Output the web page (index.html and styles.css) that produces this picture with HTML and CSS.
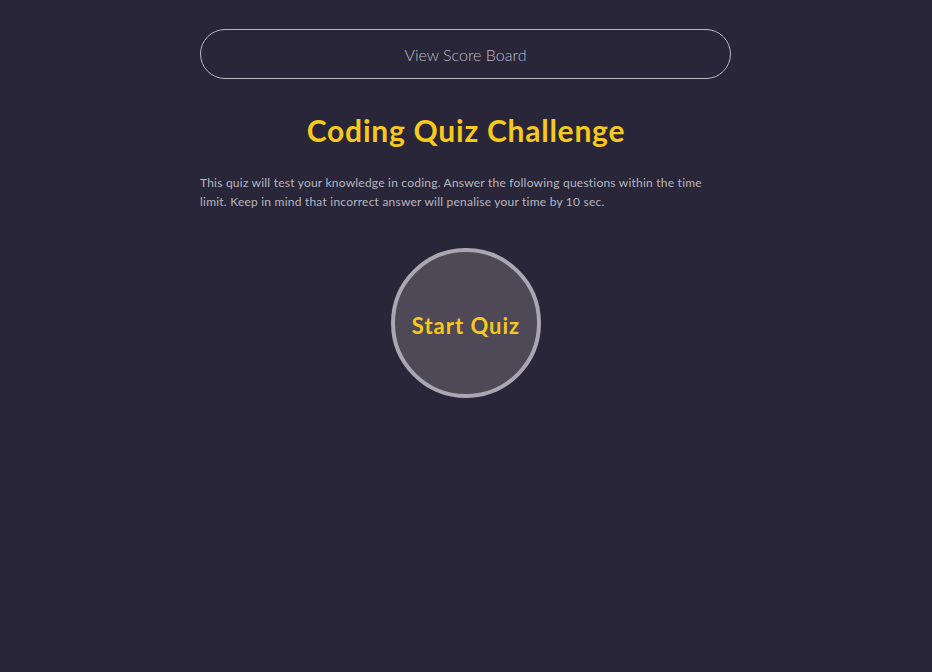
FILE: index.html
```html
<!DOCTYPE html>
<html>
<head>
<meta charset="utf-8">
<link rel="stylesheet" href="styles.css">
</head>
<body>
<main class="page">
  <button class="score-btn">View Score Board</button>
  <h1 class="title">Coding Quiz Challenge</h1>
  <p class="intro">This quiz will test your knowledge in coding. Answer the following questions within the time limit. Keep in mind that incorrect answer will penalise your time by 10 sec.</p>
  <div class="start-wrap">
    <button class="start-btn">Start Quiz</button>
  </div>
</main>
</body>
</html>
```
FILE: styles.css
```css
html, body {
  margin: 0;
  padding: 0;
  background: #282638;
  height: 100%;
}
body {
  font-family: Lato, "Open Sans", sans-serif;
}
.page {
  width: 532px;
  margin: 0 auto;
  padding-top: 29px;
  display: flex;
  flex-direction: column;
}
.score-btn {
  width: 531px;
  height: 50px;
  border: 1px solid #b9b8c2;
  border-radius: 25px;
  background: transparent;
  color: #bdbcc6;
  font-family: Lato, sans-serif;
  font-size: 16px;
  font-weight: 300;
  padding: 0;
  box-sizing: border-box;
}
.title {
  margin: 33px 0 0;
  text-align: center;
  font-size: 30px;
  font-weight: 700;
  letter-spacing: 0.75px;
  color: #f7c91d;
  line-height: 36px;
}
.intro {
  width: 531px;
  margin: 25px 0 0;
  font-size: 12px;
  line-height: 19px;
  letter-spacing: 0.22px;
  color: #b7b6c0;
  font-weight: 400;
}
.start-wrap {
  display: flex;
  justify-content: center;
  margin-top: 37px;
}
.start-btn {
  width: 150px;
  height: 150px;
  border-radius: 50%;
  border: 4px solid #a9a7b1;
  background: #4f4856;
  color: #f7c91d;
  font-family: Lato, sans-serif;
  font-size: 22px;
  font-weight: 700;
  letter-spacing: 1px;
  padding: 0;
  box-sizing: border-box;
  padding-top: 4px;
}
```
